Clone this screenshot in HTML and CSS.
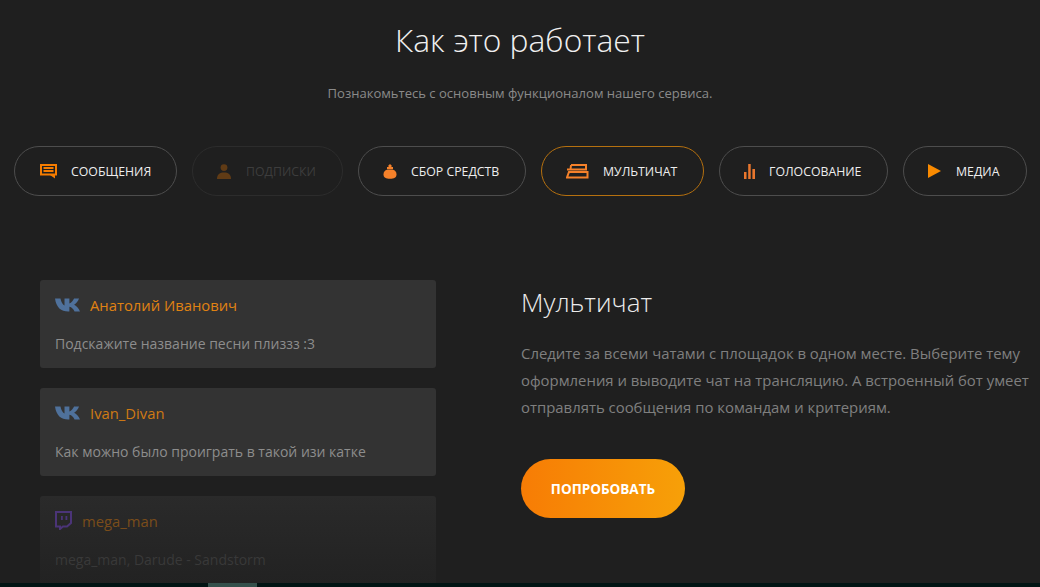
FILE: index.html
```html
<!DOCTYPE html>
<html lang="ru">
<head>
  <meta charset="UTF-8">
  <title>Как это работает</title>
  <link rel="stylesheet" href="styles.css">
</head>
<body>
  <div class="page">
    <h1>Как это работает</h1>
    <p class="lead">Познакомьтесь с основным функционалом нашего сервиса.</p>

    <div class="tabs">
      <div class="tab tab-messages">
        <svg class="tab-icon" width="17" height="15" viewBox="0 0 17 15"><path d="M1 1h15v9.500H1z M3.500 4h10 M3.500 7h10" fill="none" stroke="#f57c00" stroke-width="2"/><path d="M10 11h5v3.500z" fill="#f57c00"/></svg>
        <span>СООБЩЕНИЯ</span>
      </div>
      <div class="tab tab-subs off">
        <svg class="tab-icon" width="16" height="15" viewBox="0 0 16 15"><circle cx="8" cy="3.600" r="3.400" fill="#f57c00"/><path d="M1 15c0-5 3-6.500 7-6.500s7 1.500 7 6.500z" fill="#f57c00"/></svg>
        <span>ПОДПИСКИ</span>
      </div>
      <div class="tab tab-funds">
        <svg class="tab-icon" width="14" height="15" viewBox="0 0 14 15"><path d="M7 0l2 2-2 2-2-2z M4 3h6v2H4z" fill="#f5812a"/><path d="M4.500 5.500h5C12.500 6.500 13.500 8 13.500 10.500 13.500 13.500 11 14.800 7 14.800S.5 13.500.5 10.500C.5 8 1.500 6.500 4.500 5.500z" fill="#f5812a"/></svg>
        <span>СБОР СРЕДСТВ</span>
      </div>
      <div class="tab tab-multi active">
        <svg class="tab-icon" width="23" height="15" viewBox="0 0 23 15"><path d="M5 1h15v4.500H1 M5 1L4.500 5.500" fill="none" stroke="#f5812a" stroke-width="2"/><path d="M3 8h18.500v5.500H1z" fill="none" stroke="#f5812a" stroke-width="2"/></svg>
        <span>МУЛЬТИЧАТ</span>
      </div>
      <div class="tab tab-vote">
        <svg class="tab-icon" width="11" height="15" viewBox="0 0 11 15"><path d="M0 8h2.500v7H0z M4.200 0h2.500v15H4.200z M8.400 5H11v10H8.400z" fill="#e8762d"/></svg>
        <span>ГОЛОСОВАНИЕ</span>
      </div>
      <div class="tab tab-media">
        <svg class="tab-icon" width="13" height="14" viewBox="0 0 13 14"><path d="M0 0l13 7-13 7z" fill="#f98a00"/></svg>
        <span>МЕДИА</span>
      </div>
    </div>

    <div class="content">
      <div class="chat">
        <div class="msg">
          <div class="msg-head">
            <svg class="vk" width="25" height="14" viewBox="0 0 20.500 14" preserveAspectRatio="none"><path d="M0 .5h4.500c.4 3 1.700 6 3.300 7V.5h4v5c1.600-.8 3.100-3 3.800-5h4.100c-.7 3-2.600 5-4 6.200 1.600 1 3.900 3.300 4.800 6.800h-4.500c-.8-2.300-2.300-4.200-4.200-4.700v4.700h-.9C5 13.500 1 9.500 0 .5z" fill="#4f719b"/></svg>
            <span class="name">Анатолий Иванович</span>
          </div>
          <p>Подскажите название песни плиззз :3</p>
        </div>
        <div class="msg">
          <div class="msg-head">
            <svg class="vk" width="25" height="14" viewBox="0 0 20.500 14" preserveAspectRatio="none"><path d="M0 .5h4.500c.4 3 1.700 6 3.300 7V.5h4v5c1.600-.8 3.100-3 3.800-5h4.100c-.7 3-2.600 5-4 6.200 1.600 1 3.900 3.300 4.800 6.800h-4.500c-.8-2.300-2.300-4.200-4.200-4.700v4.700h-.9C5 13.500 1 9.500 0 .5z" fill="#4f719b"/></svg>
            <span class="name name-alt">Ivan_Divan</span>
          </div>
          <p>Как можно было проиграть в такой изи катке</p>
        </div>
        <div class="msg msg-faded">
          <div class="msg-head">
            <svg class="twitch" width="17" height="19" viewBox="0 0 17 19"><path d="M1 1h15v11l-4 3.500H8L5 18v-2.500H1z" fill="none" stroke="#4b3478" stroke-width="2"/><path d="M6 5h1.800v4H6z M10.500 5h1.800v4h-1.800z" fill="#4b3478"/></svg>
            <span class="name">mega_man</span>
          </div>
          <p>mega_man, Darude - Sandstorm</p>
        </div>
      </div>

      <div class="about">
        <h2>Мультичат</h2>
        <p>Следите за всеми чатами с площадок в одном месте. Выберите тему оформления и выводите чат на трансляцию. А встроенный бот умеет отправлять сообщения по командам и критериям.</p>
        <div class="try">ПОПРОБОВАТЬ</div>
      </div>
    </div>
  </div>

  <div class="scroll"><div class="thumb"></div></div>
</body>
</html>
```

FILE: styles.css
```css
* { box-sizing: border-box; margin: 0; padding: 0; font-family: 'Open Sans', sans-serif; }
html, body { height: 587px; overflow: hidden; }
body {
  background: #1f1f1f;
  display: flex;
  flex-direction: column;
}
.page {
  height: 583px;
  overflow: hidden;
  padding: 16px 0 0 14px;
}
h1 {
  font-size: 31.800px;
  font-weight: 300;
  line-height: 48px;
  color: #f0f0f0;
  text-align: center;
  margin-left: -14px;
}
.lead {
  margin: 19px 0 0 -14px;
  font-size: 13.050px;
  line-height: 20px;
  color: #8a8a8a;
  text-align: center;
}
.tabs {
  display: flex;
  gap: 15px;
  margin-top: 43px;
}
.tab {
  height: 50px;
  border: 1px solid #4d4d4d;
  border-radius: 25px;
  display: flex;
  align-items: center;
  gap: 14px;
  font-size: 12.300px;
  color: #eeeeee;
}
.tab.off {
  border-color: #2c2c2c;
  color: #3d3d3d;
}
.tab.off .tab-icon { opacity: 0.3; }
.tab.active { border-color: #b5700f; }
.tab-messages { width: 163px; padding-left: 25px; }
.tab-subs { width: 151px; padding-left: 23px; }
.tab-funds { width: 168px; padding-left: 24px; }
.tab-multi { width: 163px; padding-left: 24px; }
.tab-vote { width: 169px; padding-left: 24px; }
.tab-media { width: 124px; padding-left: 24px; gap: 15px; }
.content {
  display: flex;
  margin-top: 84px;
  padding-left: 26px;
}
.chat {
  width: 396px;
  display: flex;
  flex-direction: column;
  gap: 20px;
}
.msg {
  height: 88px;
  background: #333333;
  border-radius: 3px;
  padding: 14px 15px 0;
}
.msg-head {
  display: flex;
  align-items: center;
  gap: 10px;
  height: 21px;
}
.name {
  font-size: 14.800px;
  color: #e08212;
}
.name-alt { color: #cf7a14; }
.msg p {
  margin-top: 19px;
  font-size: 14px;
  line-height: 20px;
  color: #8d8d8d;
}
.msg-faded {
  background: linear-gradient(#2a2a2a, #222222);
}
.msg-faded .name { color: #7a4d1a; }
.msg-faded p { color: #393939; }
.about {
  width: 515px;
  margin-left: 85px;
}
h2 {
  margin-top: 2px;
  font-size: 26px;
  font-weight: 300;
  line-height: 40px;
  color: #ececec;
}
.about p {
  margin-top: 18px;
  font-size: 14.900px;
  line-height: 27px;
  color: #7f7f7f;
}
.try {
  margin-top: 38px;
  width: 164px;
  height: 59px;
  border-radius: 30px;
  background: linear-gradient(90deg, #f77c05, #f7a008);
  color: #fff;
  font-size: 13.500px;
  font-weight: 700;
  display: flex;
  align-items: center;
  justify-content: center;
}
.scroll {
  height: 4px;
  background: #011413;
  padding-left: 208px;
}
.thumb {
  width: 49px;
  height: 4px;
  background: #34504b;
}
```
